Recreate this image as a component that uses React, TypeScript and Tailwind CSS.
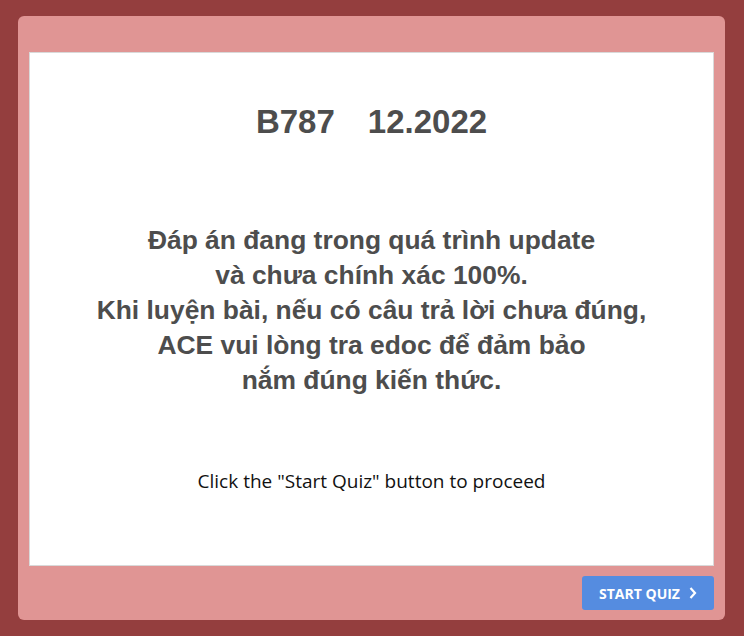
import React from 'react'

const QuizIntro = () => {
  return (
    <div className="min-h-[636px] w-full bg-[#943e3e] pt-4 pl-[18px] pr-[19px] pb-4">
      <div className="flex h-[604px] flex-col rounded-md bg-[#e09594] px-[11px] pt-9 pb-[10px]">
        <div className="flex h-[514px] flex-col items-center border border-[#d9d9d9] bg-white font-['Liberation_Sans',Arial,sans-serif] font-bold text-[#4d4d4d]">
          <h1 className="mt-[49px] flex gap-[33px] text-[33px] leading-[40px]">
            <span>B787</span>
            <span>12.2022</span>
          </h1>
          <p className="mt-[81px] text-center text-[26.4px] leading-[35px]">
            Đáp án đang trong quá trình update
            <br />
            và chưa chính xác 100%.
            <br />
            Khi luyện bài, nếu có câu trả lời chưa đúng,
            <br />
            ACE vui lòng tra edoc để đảm bảo
            <br />
            nắm đúng kiến thức.
          </p>
          <p className="mt-[69px] font-['Open_Sans',sans-serif] text-[19px] font-normal text-[#111]">
            Click the "Start Quiz" button to proceed
          </p>
        </div>
        <div className="mt-[10px] flex justify-end">
          <button className="flex h-[34px] w-[132px] items-center justify-center gap-[9px] rounded-[3px] bg-[#558ce0] font-['Open_Sans',sans-serif] text-[14px] font-bold text-white">
            START QUIZ
            <svg width="8" height="12" viewBox="0 0 8 12" fill="none">
              <path d="M1.5 1 6 6l-4.5 5" stroke="white" strokeWidth="2.2" />
            </svg>
          </button>
        </div>
      </div>
    </div>
  )
}

export default function App() {
  return <QuizIntro />
}
